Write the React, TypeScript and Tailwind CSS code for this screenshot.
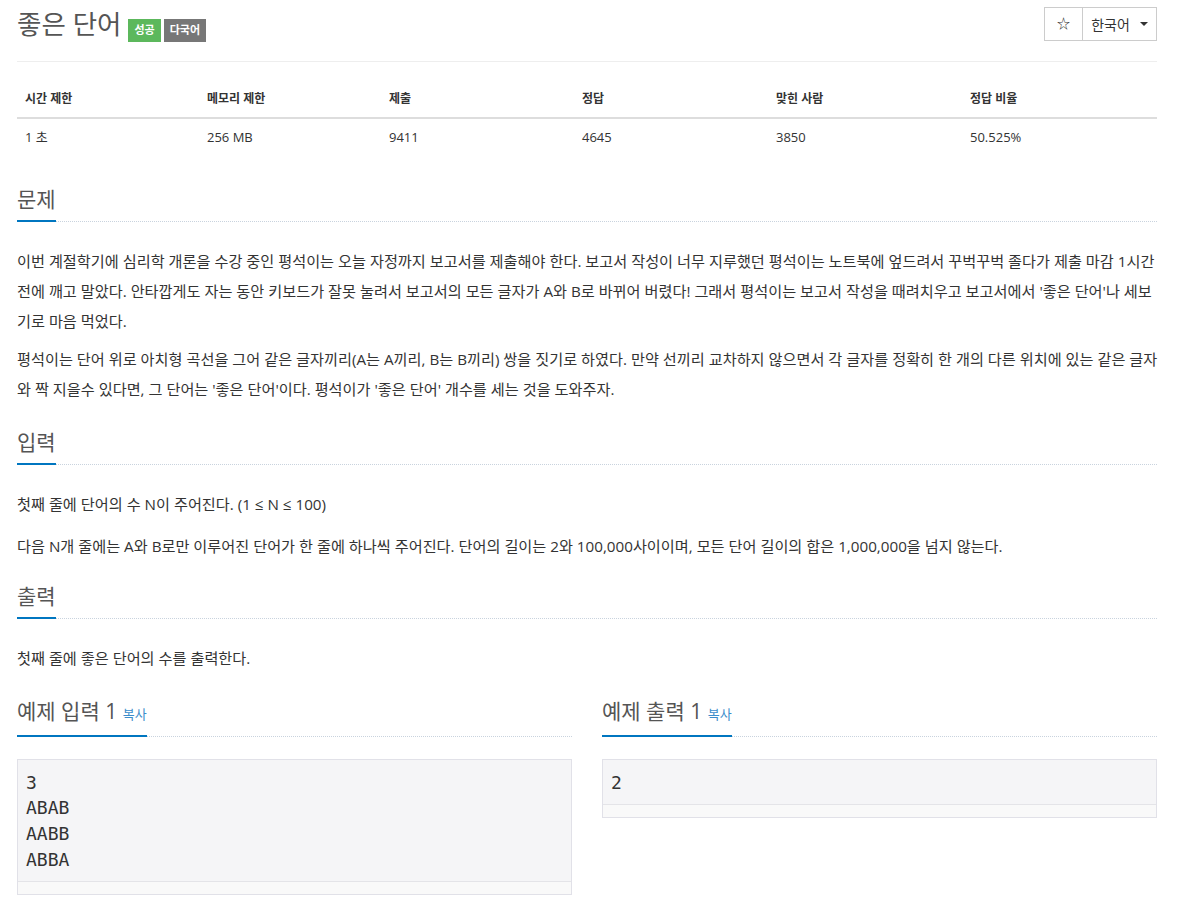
import React from "react";

const FONT = { fontFamily: '"Open Sans", "Noto Sans CJK KR", sans-serif' };

function Headline({ children }: { children: React.ReactNode }) {
  return (
    <div className="flex items-end">
      <h2 className="border-b-2 border-[#0076c0] pb-[7px] text-[21px] leading-[28px] text-[#555] font-normal whitespace-nowrap">
        {children}
      </h2>
      <div className="flex-1 border-b border-dotted border-[#c9d3de]" />
    </div>
  );
}

function Lines({ lines, className }: { lines: string[]; className?: string }) {
  return (
    <p className={"whitespace-nowrap " + (className ?? "")}>
      {lines.map((l, i) => (
        <React.Fragment key={i}>
          {l}
          {i < lines.length - 1 && <br />}
        </React.Fragment>
      ))}
    </p>
  );
}

export default function App() {
  const th = "text-left font-bold text-[12px] leading-[20px] px-[8px] py-[8px] border-b-2 border-[#ddd] text-[#333]";
  const td = "text-left text-[13px] leading-[20px] px-[8px] py-[8px] text-[#333]";
  const body = "text-[15.2px] leading-[30px] text-[#333]";
  return (
    <div className="bg-white w-full min-h-[904px]" style={FONT}>
      <div className="ml-[17px] w-[1140px] pt-[7px]">
        {/* header */}
        <div className="flex justify-between items-start pb-[20px] border-b border-[#eee]">
          <div className="flex items-start h-[34px]">
            <h1 className="text-[26.5px] leading-[34px] text-[#555] font-normal">좋은 단어</h1>
            <span className="ml-[7px] mt-[12px] bg-[#5cb85c] text-white text-[11px] font-bold h-[23px] px-[6px] flex items-center">성공</span>
            <span className="ml-[3px] mt-[12px] bg-[#777] text-white text-[11px] font-bold h-[23px] px-[6px] flex items-center">다국어</span>
          </div>
          <div className="flex h-[34px] text-[14px] text-[#333]">
            <div className="w-[39px] border border-[#ccc] flex items-center justify-center text-[13px]">☆</div>
            <div className="w-[74px] border border-l-0 border-[#ccc] flex items-center justify-center gap-[10px]">
              <span>한국어</span>
              <span className="w-0 h-0 border-l-[4px] border-r-[4px] border-t-[4px] border-l-transparent border-r-transparent border-t-[#333]" />
            </div>
          </div>
        </div>

        {/* table */}
        <table className="mt-[19px] w-full border-collapse">
          <thead>
            <tr>
              <th className={th + " w-[182px]"}>시간 제한</th>
              <th className={th + " w-[182px]"}>메모리 제한</th>
              <th className={th + " w-[193px]"}>제출</th>
              <th className={th + " w-[194px]"}>정답</th>
              <th className={th + " w-[194px]"}>맞힌 사람</th>
              <th className={th}>정답 비율</th>
            </tr>
          </thead>
          <tbody>
            <tr>
              <td className={td}>1 초</td>
              <td className={td}>256 MB</td>
              <td className={td}>9411</td>
              <td className={td}>4645</td>
              <td className={td}>3850</td>
              <td className={td}>50.525%</td>
            </tr>
          </tbody>
        </table>

        {/* 문제 */}
        <section className="mt-[30px]">
          <Headline>문제</Headline>
          <div className={"mt-[24px] " + body}>
            <Lines
              className="mb-[8px]"
              lines={[
                "이번 계절학기에 심리학 개론을 수강 중인 평석이는 오늘 자정까지 보고서를 제출해야 한다. 보고서 작성이 너무 지루했던 평석이는 노트북에 엎드려서 꾸벅꾸벅 졸다가 제출 마감 1시간",
                "전에 깨고 말았다. 안타깝게도 자는 동안 키보드가 잘못 눌려서 보고서의 모든 글자가 A와 B로 바뀌어 버렸다! 그래서 평석이는 보고서 작성을 때려치우고 보고서에서 '좋은 단어'나 세보",
                "기로 마음 먹었다.",
              ]}
            />
            <Lines
              lines={[
                "평석이는 단어 위로 아치형 곡선을 그어 같은 글자끼리(A는 A끼리, B는 B끼리) 쌍을 짓기로 하였다. 만약 선끼리 교차하지 않으면서 각 글자를 정확히 한 개의 다른 위치에 있는 같은 글자",
                "와 짝 지을수 있다면, 그 단어는 '좋은 단어'이다. 평석이가 '좋은 단어' 개수를 세는 것을 도와주자.",
              ]}
            />
          </div>
        </section>

        {/* 입력 */}
        <section className="mt-[24px]">
          <Headline>입력</Headline>
          <div className={"mt-[24px] " + body}>
            <p className="mb-[12px]">첫째 줄에 단어의 수 N이 주어진다. (1 ≤ N ≤ 100)</p>
            <p>
              다음 N개 줄에는 A와 B로만 이루어진 단어가 한 줄에 하나씩 주어진다. 단어의 길이는 2와 100,000사이이며, 모든 단어 길이의 합은 1,000,000을 넘지 않는다.
            </p>
          </div>
        </section>

        {/* 출력 */}
        <section className="mt-[21px]">
          <Headline>출력</Headline>
          <div className={"mt-[24px] " + body}>
            <p>첫째 줄에 좋은 단어의 수를 출력한다.</p>
          </div>
        </section>

        {/* 예제 */}
        <div className="mt-[24px] grid grid-cols-2 gap-[30px] items-start">
          {[
            { title: "예제 입력 1", lines: ["3", "ABAB", "AABB", "ABBA"] },
            { title: "예제 출력 1", lines: ["2"] },
          ].map((ex) => (
            <section key={ex.title}>
              <Headline>
                {ex.title} <span className="text-[13px] text-[#3c8dcb]">복사</span>
              </Headline>
              <div className="mt-[22px] border border-[#e1e1e8] bg-[#f5f5f7]">
                <pre
                  className="px-[8px] pt-[9.5px] pb-[8.5px] text-[18px] leading-[25.7px] text-[#333]"
                  style={{ fontFamily: '"DejaVu Sans Mono", monospace' }}
                >
                  {ex.lines.join("\n")}
                </pre>
                <div className="h-[13px] border-t border-[#e4e4e8] bg-[#f9f9f9]" />
              </div>
            </section>
          ))}
        </div>
      </div>
    </div>
  );
}
